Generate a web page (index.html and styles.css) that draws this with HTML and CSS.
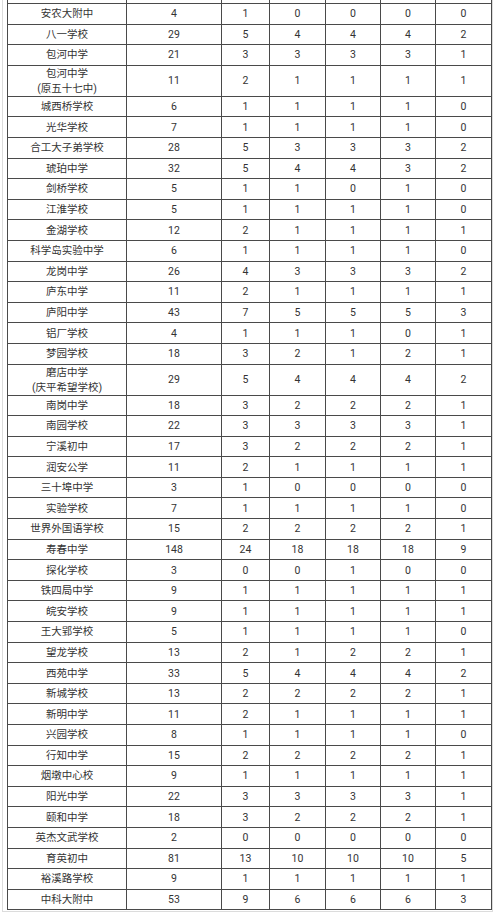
FILE: index.html
```html
<!DOCTYPE html>
<html lang="zh-CN">
<head>
<meta charset="utf-8">
<title>学校名额分配表</title>
<link rel="stylesheet" href="styles.css">
</head>
<body>
<div class="frame">
<table class="quota">
<colgroup>
<col class="c-name"><col class="c-total"><col class="c-a"><col class="c-b"><col class="c-c"><col class="c-d"><col class="c-e">
</colgroup>
<tbody>
<tr class="cut"><td></td><td></td><td></td><td></td><td></td><td></td><td></td></tr>
<tr><td>安农大附中</td><td>4</td><td>1</td><td>0</td><td>0</td><td>0</td><td>0</td></tr>
<tr><td>八一学校</td><td>29</td><td>5</td><td>4</td><td>4</td><td>4</td><td>2</td></tr>
<tr><td>包河中学</td><td>21</td><td>3</td><td>3</td><td>3</td><td>3</td><td>1</td></tr>
<tr><td>包河中学<br>(原五十七中)</td><td>11</td><td>2</td><td>1</td><td>1</td><td>1</td><td>1</td></tr>
<tr><td>城西桥学校</td><td>6</td><td>1</td><td>1</td><td>1</td><td>1</td><td>0</td></tr>
<tr><td>光华学校</td><td>7</td><td>1</td><td>1</td><td>1</td><td>1</td><td>0</td></tr>
<tr><td>合工大子弟学校</td><td>28</td><td>5</td><td>3</td><td>3</td><td>3</td><td>2</td></tr>
<tr><td>琥珀中学</td><td>32</td><td>5</td><td>4</td><td>4</td><td>3</td><td>2</td></tr>
<tr><td>剑桥学校</td><td>5</td><td>1</td><td>1</td><td>0</td><td>1</td><td>0</td></tr>
<tr><td>江淮学校</td><td>5</td><td>1</td><td>1</td><td>1</td><td>1</td><td>0</td></tr>
<tr><td>金湖学校</td><td>12</td><td>2</td><td>1</td><td>1</td><td>1</td><td>1</td></tr>
<tr><td>科学岛实验中学</td><td>6</td><td>1</td><td>1</td><td>1</td><td>1</td><td>0</td></tr>
<tr><td>龙岗中学</td><td>26</td><td>4</td><td>3</td><td>3</td><td>3</td><td>2</td></tr>
<tr><td>庐东中学</td><td>11</td><td>2</td><td>1</td><td>1</td><td>1</td><td>1</td></tr>
<tr><td>庐阳中学</td><td>43</td><td>7</td><td>5</td><td>5</td><td>5</td><td>3</td></tr>
<tr><td>铝厂学校</td><td>4</td><td>1</td><td>1</td><td>1</td><td>0</td><td>1</td></tr>
<tr><td>梦园学校</td><td>18</td><td>3</td><td>2</td><td>1</td><td>2</td><td>1</td></tr>
<tr><td>磨店中学<br>(庆平希望学校)</td><td>29</td><td>5</td><td>4</td><td>4</td><td>4</td><td>2</td></tr>
<tr><td>南岗中学</td><td>18</td><td>3</td><td>2</td><td>2</td><td>2</td><td>1</td></tr>
<tr><td>南园学校</td><td>22</td><td>3</td><td>3</td><td>3</td><td>3</td><td>1</td></tr>
<tr><td>宁溪初中</td><td>17</td><td>3</td><td>2</td><td>2</td><td>2</td><td>1</td></tr>
<tr><td>润安公学</td><td>11</td><td>2</td><td>1</td><td>1</td><td>1</td><td>1</td></tr>
<tr><td>三十埠中学</td><td>3</td><td>1</td><td>0</td><td>0</td><td>0</td><td>0</td></tr>
<tr><td>实验学校</td><td>7</td><td>1</td><td>1</td><td>1</td><td>1</td><td>0</td></tr>
<tr><td>世界外国语学校</td><td>15</td><td>2</td><td>2</td><td>2</td><td>2</td><td>1</td></tr>
<tr><td>寿春中学</td><td>148</td><td>24</td><td>18</td><td>18</td><td>18</td><td>9</td></tr>
<tr><td>探化学校</td><td>3</td><td>0</td><td>0</td><td>1</td><td>0</td><td>0</td></tr>
<tr><td>铁四局中学</td><td>9</td><td>1</td><td>1</td><td>1</td><td>1</td><td>1</td></tr>
<tr><td>皖安学校</td><td>9</td><td>1</td><td>1</td><td>1</td><td>1</td><td>1</td></tr>
<tr><td>王大郢学校</td><td>5</td><td>1</td><td>1</td><td>1</td><td>1</td><td>0</td></tr>
<tr><td>望龙学校</td><td>13</td><td>2</td><td>1</td><td>2</td><td>2</td><td>1</td></tr>
<tr><td>西苑中学</td><td>33</td><td>5</td><td>4</td><td>4</td><td>4</td><td>2</td></tr>
<tr><td>新城学校</td><td>13</td><td>2</td><td>2</td><td>2</td><td>2</td><td>1</td></tr>
<tr><td>新明中学</td><td>11</td><td>2</td><td>1</td><td>1</td><td>1</td><td>1</td></tr>
<tr><td>兴园学校</td><td>8</td><td>1</td><td>1</td><td>1</td><td>1</td><td>0</td></tr>
<tr><td>行知中学</td><td>15</td><td>2</td><td>2</td><td>2</td><td>2</td><td>1</td></tr>
<tr><td>烟墩中心校</td><td>9</td><td>1</td><td>1</td><td>1</td><td>1</td><td>1</td></tr>
<tr><td>阳光中学</td><td>22</td><td>3</td><td>3</td><td>3</td><td>3</td><td>1</td></tr>
<tr><td>颐和中学</td><td>18</td><td>3</td><td>2</td><td>2</td><td>2</td><td>1</td></tr>
<tr><td>英杰文武学校</td><td>2</td><td>0</td><td>0</td><td>0</td><td>0</td><td>0</td></tr>
<tr><td>育英初中</td><td>81</td><td>13</td><td>10</td><td>10</td><td>10</td><td>5</td></tr>
<tr><td>裕溪路学校</td><td>9</td><td>1</td><td>1</td><td>1</td><td>1</td><td>1</td></tr>
<tr><td>中科大附中</td><td>53</td><td>9</td><td>6</td><td>6</td><td>6</td><td>3</td></tr>
</tbody>
</table>
</div>
</body>
</html>
```

FILE: styles.css
```css
html, body {
  margin: 0;
  padding: 0;
  background: #ffffff;
}

body {
  font-family: Roboto, "Noto Sans CJK SC", sans-serif;
  color: #333333;
  overflow: hidden;
}

.frame {
  margin-left: 2px;
  width: 489px;
  border-left: 1px solid #dcdcdc;
  border-right: 1px solid #dcdcdc;
  border-bottom: 1px solid #dcdcdc;
  padding: 0 1px 1px 4px;
  box-sizing: content-box;
  width: 484px;
}

.quota {
  width: 484px;
  table-layout: fixed;
  border-collapse: collapse;
  font-size: 10.5px;
}

.c-name { width: 119px; }
.c-total { width: 95px; }
.c-a { width: 48px; }
.c-b { width: 56px; }
.c-c { width: 55px; }
.c-d { width: 55px; }
.c-e { width: 56px; }

.quota td {
  border: 1px solid #4a4a4a;
  padding: 0;
  height: 19.6px;
  line-height: 15px;
  text-align: center;
  vertical-align: middle;
}

.quota tr.cut td {
  height: 3px;
  line-height: 0;
  border-top: none;
}
```
